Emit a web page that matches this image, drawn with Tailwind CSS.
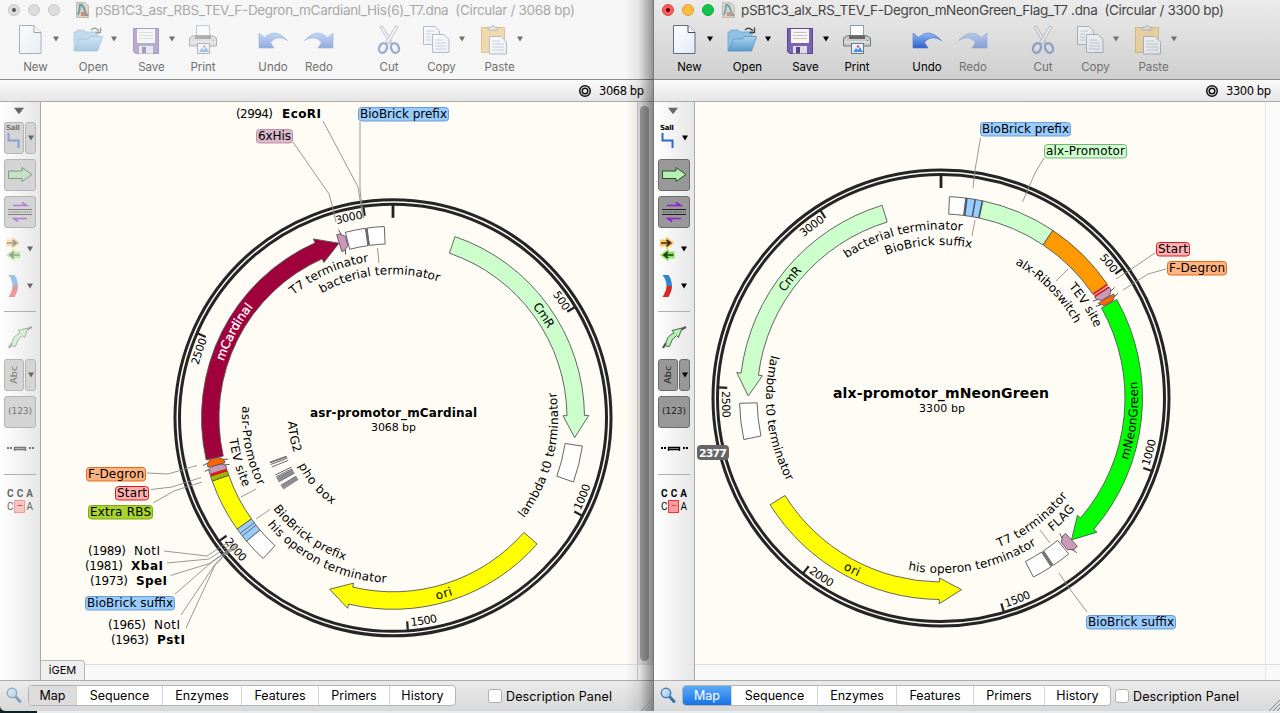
<!DOCTYPE html>
<html lang="en">
<head>
<meta charset="utf-8">
<title>Plasmid maps</title>
<script src="https://cdn.jsdelivr.net/npm/@tailwindcss/browser@4"></script>
</head>
<body class="w-[1280px] h-[713px] overflow-hidden bg-[#e9ebec] [font-family:Inter,Roboto,sans-serif] text-black">

<svg class="absolute w-0 h-0">
  <defs>
    <linearGradient id="gPaper" x1="0" y1="0" x2="1" y2="1"><stop offset="0" stop-color="#fff"/><stop offset="1" stop-color="#dfe9f5"/></linearGradient>
    <linearGradient id="gFolder" x1="0" y1="0" x2="0" y2="1"><stop offset="0" stop-color="#a9d3ee"/><stop offset="1" stop-color="#5a9dcb"/></linearGradient>
    <linearGradient id="gBlue" x1="0" y1="0" x2="0" y2="1"><stop offset="0" stop-color="#8fb8ee"/><stop offset="1" stop-color="#2c62cf"/></linearGradient>
    <linearGradient id="gLens" x1="0" y1="0" x2="1" y2="1"><stop offset="0" stop-color="#eaf6ff"/><stop offset="1" stop-color="#8cc0ea"/></linearGradient>
  </defs>
  <symbol id="i-new" viewBox="0 0 30 32"><path d="M4.500 1.500H19L26 8.500V29.500H4.500Z" fill="url(#gPaper)" stroke="#5d6d85"/><path d="M19 1.500V8.500H26" fill="#f5f9ff" stroke="#3f4d63"/></symbol>
  <symbol id="i-open" viewBox="0 0 30 32"><path d="M1 27V8h2l1-2h7l2 2h12v6" fill="#8fc1e2" stroke="#6ea3c9" stroke-width=".8"/><path d="M1 27L6.500 15h9l2-2.500H29.500L24.500 27Z" fill="url(#gFolder)" stroke="#5792bf" stroke-width=".8"/><path d="M18 6q4-4 8 1" fill="none" stroke="#444" stroke-width="1.300"/><path d="M27.500 3.500V8.500H22.500" fill="none" stroke="#444" stroke-width="1.300"/></symbol>
  <symbol id="i-save" viewBox="0 0 30 32"><path d="M2.500 4.500H27.500V29.500H4.500L2.500 27.500Z" fill="#7a63b0" stroke="#5a4690"/><rect x="6" y="5" width="18" height="14" fill="#f7f7f2"/><path d="M8 8.500H22M8 11.500H22M8 14.500H22" stroke="#b9b9b9" stroke-width=".8"/><rect x="8" y="22" width="14" height="7.500" fill="#dcdce4"/><rect x="11" y="23" width="4" height="6.500" fill="#554288"/></symbol>
  <symbol id="i-print" viewBox="0 0 30 32"><rect x="8.500" y="1.500" width="13" height="11" fill="#fff" stroke="#8aa0b5"/><path d="M6 11.500H24L28.500 14V22H1.500V14Z" fill="#c9c9c9" stroke="#777"/><rect x="7" y="12" width="16" height="3" fill="#666"/><path d="M2 18H28" stroke="#f0f0f0"/><circle cx="25.500" cy="16.500" r=".8" fill="#2b2"/><rect x="9.500" y="19.500" width="12" height="10" fill="#e8f3ff" stroke="#678"/><path d="M11 28l3-4 2 2 2-3 3 5z" fill="#4a8fe0"/><circle cx="16" cy="22.500" r="1.200" fill="#d55"/></symbol>
  <symbol id="i-undo" viewBox="0 0 30 32"><path d="M1 9L6.500 13.500Q17 3 29.500 16.500Q19 10 12.500 18.500L16 24H1Z" fill="url(#gBlue)" stroke="#4a76c8" stroke-width=".6"/></symbol>
  <symbol id="i-cut" viewBox="0 0 30 32"><path d="M6 3L8.500 2L18 18L16 20Z" fill="#e8eef5" stroke="#6f7f92" stroke-width=".8"/><path d="M24 3L21.500 2L12 18L14 20Z" fill="#f4f8fc" stroke="#6f7f92" stroke-width=".8"/><ellipse cx="9" cy="24" rx="3.800" ry="5" transform="rotate(25 9 24)" fill="none" stroke="#4668b4" stroke-width="2.400"/><ellipse cx="21" cy="24" rx="3.800" ry="5" transform="rotate(-25 21 24)" fill="none" stroke="#4668b4" stroke-width="2.400"/></symbol>
  <symbol id="i-copy" viewBox="0 0 30 32"><g stroke="#6e7f9c" fill="url(#gPaper)"><path d="M2.500 2.500H14L18.500 7V20.500H2.500Z"/><path d="M11.500 10.500H23L28 15.500V28.500H11.500Z"/></g><path d="M5 7H13M5 10H10M5 13H10M5 16H10M14 16H22M14 19H25M14 22H25M14 25H25" stroke="#a3adc0"/></symbol>
  <symbol id="i-paste" viewBox="0 0 30 32"><rect x="2.500" y="3.500" width="23" height="25" fill="#ecbf62" stroke="#c3923a"/><path d="M9 6V3.500H12Q14 -.5 16 3.500H19V6Z" fill="#d9dde2" stroke="#777"/><path d="M10.500 12.500H22L27.500 18V30H10.500Z" fill="url(#gPaper)" stroke="#6e7f9c"/><path d="M13 17H21M13 20H25M13 23H25M13 26H25" stroke="#a3adc0"/></symbol>
  <symbol id="i-tri" viewBox="0 0 6 6"><path d="M0 .5H6L3 5.500Z" fill="currentColor"/></symbol>
  <symbol id="i-doc" viewBox="0 0 13 16"><path d="M.5 .5H9L12.500 4V15.500H.5Z" fill="#d9cbb9" stroke="#b9ab9a"/><path d="M2 13Q4 8 4 3Q7 2 9 9Q10 12 12 14" fill="none" stroke="#3d8ca3" stroke-width="2"/><path d="M5 10h6v4h-6z" fill="#b07a62"/></symbol>
  <symbol id="i-feat" viewBox="0 0 32 32"><path d="M4.500 12H18V8.500L28 15.500L18 22.500V19.500H4.500Z" fill="#b4efb4" stroke="#2d4a2d"/></symbol>
  <symbol id="i-prim" viewBox="0 0 32 32"><path d="M4 13.500H28M4 18.500H28" stroke="#222" stroke-width="1.200"/><path d="M5 16H28" stroke="#777" stroke-width="2" stroke-dasharray="1.500 1"/><path d="M9 9.500H22.500L18 6.500" fill="none" stroke="#8a1fd6" stroke-width="1.700"/><path d="M23 22.500H10L14 25.500" fill="none" stroke="#8a1fd6" stroke-width="1.700"/></symbol>
  <symbol id="i-orf" viewBox="0 0 22 32"><path d="M3 6.500H9V3.500L17.500 10L9 16.500V13.500H3Z" fill="#ffc266"/><path d="M4 10H12.500M9.500 7L13.500 10L9.500 13" fill="none" stroke="#3a2a10" stroke-width="1.700"/><path d="M17.500 18.500H11.500V15.500L3 22L11.500 28.500V25.500H17.500Z" fill="#8fe05c"/><path d="M16.500 22H8M11 19L7 22L11 25" fill="none" stroke="#1d3a10" stroke-width="1.700"/></symbol>
  <symbol id="i-arc" viewBox="0 0 22 32"><path d="M5.500 5H11.500Q15 10 15 16H9.500Q9.500 10 5.500 5Z" fill="#2f86c8"/><path d="M15 16Q15 21 11.500 27H5.500Q9.500 21 9.500 16Z" fill="#d42a2a"/></symbol>
  <symbol id="i-curve" viewBox="0 0 32 32"><path d="M5 26L8 21M22 8L28 5" stroke="#5b4a5b" stroke-width="2.200"/><path d="M7.500 24Q8 14 16 11L14 8.500L24 6L20.500 15.500L18.500 13.500Q13 17 11.500 24.500Z" fill="#b4efb4" stroke="#4a6a4a"/></symbol>
  <symbol id="i-gap" viewBox="0 0 32 32"><path d="M3 15H8M25 15H30" stroke="currentColor" stroke-width="2" stroke-dasharray="2 1"/><path d="M10.500 18V14.500H21.500V18M11 16.500H21" fill="none" stroke="currentColor" stroke-width="1.300"/></symbol>
  <symbol id="i-search" viewBox="0 0 16 16"><path d="M9 9L14 14.500" stroke="#2d6fae" stroke-width="2.800" stroke-linecap="round"/><circle cx="6" cy="6" r="4.700" fill="url(#gLens)" stroke="#4a7eb0" stroke-width="1.500"/></symbol>
  <symbol id="i-ring" viewBox="0 0 14 14"><circle cx="7" cy="7" r="5.300" fill="none" stroke="#111" stroke-width="1.500"/><circle cx="7" cy="7" r="2.800" fill="none" stroke="#111" stroke-width="1.500"/></symbol>
</svg>

<div id="desk" class="flex w-[1280px] h-[711px]"></div>
<div class="flex h-[2px] w-[1280px]"><div class="w-[37px] bg-[#0c2226]"></div></div>

<script>
const tri = '<svg class="w-[6px] h-[6px]"><use href="#i-tri"/></svg>';
const wide = (id, label, space, on) => `<div class="flex flex-col w-[50px] ${space} ${on ? 'text-black' : 'text-[#707070]'}">
  <div class="flex items-center pl-[5px] h-[32px]"><svg class="w-[30px] h-[32px] ${on ? '' : 'opacity-50'}"><use href="#${id}"/></svg><span class="flex ml-[8px] -mt-[2px]">${tri}</span></div>
  <div class="text-center text-[11.500px] leading-[14px] pt-[4px] pl-px">${label}</div></div>`;
const slim = (id, label, space, on, flip) => `<div class="flex flex-col items-center w-[40px] ${space} ${on ? 'text-black' : 'text-[#707070]'}">
  <svg class="w-[30px] h-[32px] ${on ? '' : 'opacity-50'} ${flip ? '-scale-x-100' : ''}"><use href="#${id}"/></svg>
  <div class="text-center text-[11.500px] leading-[14px] pt-[4px]">${label}</div></div>`;

function toolbar(on) {
  return `<div class="flex h-[57px] pl-[10px] pt-[4px]">
    ${wide('i-new', 'New', '', on)}${wide('i-open', 'Open', 'ml-[8px]', on)}${wide('i-save', 'Save', 'ml-[8px]', on)}
    ${slim('i-print', 'Print', 'ml-[7px]', on)}${slim('i-undo', 'Undo', 'ml-[30px]', on)}${slim('i-undo', 'Redo', 'ml-[6px]', false, true)}
    ${slim('i-cut', 'Cut', 'ml-[30px]', false)}${wide('i-copy', 'Copy', 'ml-[7px]', false)}${wide('i-paste', 'Paste', 'ml-[8px]', false)}</div>`;
}

function sidebar(on) {
  const press = on ? 'bg-[#989898] border-[#6b6b6b]' : 'bg-[#d4d4d4] border-[#b5b5b5]';
  const fade = on ? '' : 'opacity-45';
  const sal = on ? 'border-transparent' : 'bg-[#d4d4d4] border-[#b5b5b5]';
  return `<div class="w-[41px] shrink-0 flex flex-col pl-[4px] pt-[5px] border-r border-[#a9a9a4] bg-linear-to-r from-white to-[#e6e6e6]">
    <svg class="w-[10px] h-[8px] ml-[10px] text-[#666]" viewBox="0 0 6 6" preserveAspectRatio="none"><path d="M0 .5H6L3 5.500Z" fill="currentColor"/></svg>
    <div class="flex flex-col gap-[5px] mt-[7px] w-[32px]">
      <div class="flex gap-px h-[32px]"><div class="relative w-[20px] rounded-[3px] border ${sal}"><span class="absolute left-[1px] top-[1px] text-[7px] font-bold leading-[9px] tracking-[-.3px] [font-family:'DejaVu_Sans',sans-serif] ${fade}">SalI</span><svg class="absolute -left-px -top-px w-[20px] h-[32px] ${fade}" viewBox="0 0 20 32"><path d="M4.500 11V18.500H14.500V26" fill="none" stroke="#2a66cc" stroke-width="2"/></svg></div><div class="flex items-center justify-center w-[11px] rounded-[3px] border ${sal} ${on ? '' : 'text-[#666]'}">${tri}</div></div>
      <div class="h-[32px] rounded-[3px] border ${press}"><svg class="-m-px w-[32px] h-[32px] ${fade}"><use href="#i-feat"/></svg></div>
      <div class="h-[32px] rounded-[3px] border ${press}"><svg class="-m-px w-[32px] h-[32px] ${fade}"><use href="#i-prim"/></svg></div>
      <div class="flex h-[32px] items-center"><svg class="-ml-px w-[22px] h-[32px] ${fade}"><use href="#i-orf"/></svg><span class="flex ml-[2px] -mt-px ${on ? '' : 'text-[#666]'}">${tri}</span></div>
      <div class="flex h-[32px] items-center"><svg class="-ml-px w-[22px] h-[32px] ${fade}"><use href="#i-arc"/></svg><span class="flex ml-[2px] -mt-px ${on ? '' : 'text-[#666]'}">${tri}</span></div>
    </div>
    <div class="w-[32px] h-px bg-[#b0b0b0] mt-[9px]"></div>
    <div class="flex flex-col gap-[5px] mt-[10px] w-[32px]">
      <div class="h-[32px]"><svg class="w-[32px] h-[32px] ${fade}"><use href="#i-curve"/></svg></div>
      <div class="flex gap-px h-[32px]"><div class="flex items-center justify-center w-[20px] rounded-[3px] border ${press}"><span class="-rotate-90 text-[9.500px] leading-none [font-family:'DejaVu_Sans',sans-serif] ${on ? 'text-[#222]' : 'text-[#777]'}">Abc</span></div><div class="flex items-center justify-center w-[11px] rounded-[3px] border ${press} ${on ? '' : 'text-[#666]'}">${tri}</div></div>
      <div class="flex items-center justify-center h-[32px] rounded-[3px] border text-[9px] [font-family:'DejaVu_Sans',sans-serif] ${press} ${on ? 'text-[#222]' : 'text-[#777]'}">(123)</div>
      <div class="h-[32px] ${on ? '' : 'text-[#777]'}"><svg class="w-[32px] h-[32px]"><use href="#i-gap"/></svg></div>
    </div>
    <div class="w-[32px] h-px bg-[#b0b0b0] mt-[9px]"></div>
    <div class="w-[26px] ml-[3px] mt-[12px] text-[10px] leading-[13px] [font-family:Roboto,sans-serif] ${on ? '' : 'text-[#666]'}">
      <div class="flex justify-between font-bold"><span>C</span><span>C</span><span>A</span></div>
      <div class="flex justify-between items-center"><span>C</span><span class="w-[11px] h-[13px] leading-[10px] text-center border text-[#c44] ${on ? 'bg-[#ff9d9d] border-[#e33]' : 'bg-[#f9c4c4] border-[#e99]'}">–</span><span>A</span></div>
    </div></div>`;
}

function bottom(on) {
  const tabs = [['Map', on ? 'w-[48px]' : 'w-[47px]'], ['Sequence', 'w-[86px]'], ['Enzymes', 'w-[79px]'], ['Features', 'w-[77px]'], ['Primers', 'w-[71px]'], ['History', 'w-[66px]']];
  return `<div class="flex items-center h-[31px] border-t border-[#acacac] bg-linear-to-b from-[#ebebeb] to-[#d8d8d8] pl-[6px] text-[12.500px] ${on ? '' : 'rounded-bl-[5px]'}">
    <svg class="w-[16px] h-[16px] shrink-0 -mt-[2px] ${on ? '' : 'opacity-55'}"><use href="#i-search"/></svg>
    <div class="flex ml-[6px] -mt-px h-[21px] shrink-0 rounded-[4px] border border-[#b4b4b4] bg-white overflow-hidden">${tabs.map((t, i) =>
      `<div class="${t[1]} leading-[19px] text-center ${i ? 'border-l border-[#d5d5d5]' : on ? 'bg-linear-to-b from-[#5aa9f6] to-[#1173e6] text-white' : 'bg-[#dcdcdc]'}">${t[0]}</div>`).join('')}</div>
    <div class="w-[14px] h-[14px] shrink-0 rounded-[3px] border border-[#b0b0b0] bg-white ${on ? 'ml-[4px]' : 'ml-[32px]'}"></div>
    <svg class="ml-[4px] w-[108px] h-[18px] shrink-0"><text x="0" y="14" textLength="106">Description Panel</text></svg></div>`;
}

function win(o) {
  const on = o.on;
  const dots = on ? ['bg-[#fc5b57] border-[#df4744]', 'bg-[#fdbb40] border-[#de9f34]', 'bg-[#12c552] border-[#12ac2c]']
                  : ['bg-[#dcdcdc] border-[#c8c8c8]', 'bg-[#dcdcdc] border-[#c8c8c8]', 'bg-[#dcdcdc] border-[#c8c8c8]'];
  return `<div class="relative h-[711px] flex flex-col ${on ? 'w-[627px] border-l border-[#777]' : 'w-[653px] bg-[#0c2226]'} shrink-0">
    <div class="h-[80px] border-b border-[#8a8a8a] ${on ? 'bg-linear-to-b from-[#ebebeb] to-[#cfcfcf]' : 'bg-[#f6f6f6]'}">
      <div class="flex items-center h-[20px] pl-[8px]">
        <div class="flex gap-[8px]">${dots.map((d, i) => `<div class="flex items-center justify-center w-[12px] h-[12px] rounded-full border ${d}">${i ? '' : `<div class="w-[4px] h-[4px] rounded-full ${on ? 'bg-[#4d0000]' : 'bg-[#555]'}"></div>`}</div>`).join('')}</div>
        <svg class="w-[13px] h-[16px] shrink-0 ${on ? 'ml-[8px] opacity-70' : 'ml-[16px] opacity-80'}"><use href="#i-doc"/></svg>
        <svg class="h-[20px] w-[490px] ml-[5px] overflow-visible"><text x="1" y="15" textLength="${on ? 483 : 480}" class="text-[13.500px] whitespace-pre ${on ? 'fill-[#444]' : 'fill-[#a8a8a8]'}">${o.title}</text></svg>
      </div>
      ${toolbar(on)}
    </div>
    <div class="flex items-center justify-end h-[22px] border-b border-[#aeaaa3] bg-linear-to-b from-[#fafafa] to-[#e6e6e6] pr-[8px]">
      <svg class="w-[14px] h-[14px]"><use href="#i-ring"/></svg>
      <svg class="w-[46px] h-[16px] ml-[7px]"><text x="0" y="12" textLength="45" class="text-[11.500px] [font-family:'DejaVu_Sans',sans-serif]">${o.bp}</text></svg>
    </div>
    <div class="flex flex-1 min-h-0">${sidebar(on)}
      <div class="flex flex-col flex-1 min-w-0">
        <div class="flex flex-1 min-h-0 bg-[#fffcf5]"><div class="flex-1"></div>${on
          ? '<div class="w-[15px] bg-[#fafafa] border-l border-[#e4e4e4]"></div>'
          : '<div class="w-[16px] bg-[#e4e3e6] border-l border-[#c9c8cc] pl-[2px] pr-[4px]"><div class="h-[555px] mt-[4px] rounded-full bg-[#a2a2a2]"></div></div>'}</div>
        <div class="relative h-[16px] flex justify-between border-t border-[#e0ded8] bg-[#f9f9f9]">${on
          ? '<span></span><div class="w-[15px] border-l border-[#e4e4e4]"></div>'
          : '<div class="relative w-[44px] h-[20px] -mt-[5px] leading-[18px] text-center text-[11px] border-t border-r border-[#b5b5b5] rounded-tr-[4px] bg-[#efefef] z-20">iGEM</div><div class="w-[16px] border-l border-[#c9c8cc]"></div>'}</div>
      </div>
    </div>
    ${bottom(on)}
    ${on ? '' : '<div class="absolute right-0 top-0 w-[28px] h-full bg-linear-to-r from-black/0 via-black/8 to-black/40"></div>'}
    <svg class="absolute bottom-0 ${on ? 'right-0' : 'right-[1px]'} w-[12px] h-[12px]"><path d="M1 12L12 1M5 12L12 5M9 12L12 9" stroke="#888"/></svg>
  </div>`;
}

document.getElementById('desk').innerHTML =
  win({on: false, title: 'pSB1C3_asr_RBS_TEV_F-Degron_mCardianl_His(6)_T7.dna&#160; (Circular / 3068 bp)', bp: '3068 bp'}) +
  win({on: true, title: 'pSB1C3_alx_RS_TEV_F-Degron_mNeonGreen_Flag_T7 .dna&#160; (Circular / 3300 bp)', bp: '3300 bp'}) +
  '<svg id="maps" class="absolute left-0 top-0 w-[1280px] h-[713px] pointer-events-none" viewBox="0 0 1280 713"></svg>';

// Circular map drawing: angles are degrees clockwise from twelve o'clock.
let out = '', pid = 0;
function map(m) {
  const [cx, cy] = m.c, R = m.R, a = R - 45.500, b = R - 28, mid = (a + b) / 2;
  const pt = (r, t) => (cx + r * Math.sin(t * Math.PI / 180)).toFixed(2) + ' ' + (cy - r * Math.cos(t * Math.PI / 180)).toFixed(2);
  const arc = (r, s, e) => `A${r} ${r} 0 ${Math.abs(e - s) > 180 ? 1 : 0} ${e > s ? 1 : 0} ${pt(r, e)}`;
  const ring = r => `<circle cx="${cx}" cy="${cy}" r="${r}" fill="none" stroke="#252525" stroke-width="3"/>`;
  out += ring(R - 1.500) + ring(R - 6);
  out += `<path d="M${pt(R - 6, 0)}L${pt(R - 19.500, 0)}" stroke="#222" stroke-width="2.800"/>`;
  for (const f of m.feats) {
    const [s, e, fill, base] = f;
    const d = base === undefined
      ? `M${pt(b, s)}${arc(b, s, e)}L${pt(a, e)}${arc(a, e, s)}Z`
      : `M${pt(b, s)}${arc(b, s, base)}L${pt(b + 4.300, base)}L${pt(mid, e)}L${pt(a - 4, base)}L${pt(a, base)}${arc(a, base, s)}Z`;
    out += `<path d="${d}" fill="${fill}" stroke="#555" stroke-width=".9"/>`;
  }
  // Short features: a body cut off square at the tip, with a thin line for the barbs.
  for (const [s, e, base, fill] of m.stubs || [])
    out += `<path d="M${pt(b, s)}L${pt(b, base)}L${pt(b - 4, e)}L${pt(a + 4, e)}L${pt(a, base)}L${pt(a, s)}Z" fill="${fill}" stroke="#555" stroke-width=".9"/><path d="M${pt(b + 4.300, base)}L${pt(b - 1, base + (e - base) * .3)}M${pt(a - 4, base)}L${pt(a + 1, base + (e - base) * .3)}" stroke="#555" stroke-width="1"/>`;
  for (const [t, r1, r2, w, c] of m.bars || []) out += `<path d="M${pt(r1, t)}L${pt(r2, t)}" stroke="${c || '#666'}" stroke-width="${w}"/>`;
  const curved = (txt, r, s, e, cls) => {
    const id = 'p' + (pid++), len = Math.abs(e - s) * Math.PI / 180 * r, x = e > s ? 2 : -2;
    out += `<path id="${id}" d="M${pt(r, s)}${arc(r, s, e + x)}" fill="none"/><text class="${cls}" textLength="${len.toFixed(1)}"><textPath href="#${id}" textLength="${len.toFixed(1)}">${txt}</textPath></text>`;
  };
  for (const t of m.texts) curved(t[0], t[1], t[2], t[3], t[4] || 'text-[12px]');
  for (let n = 500; n < m.len; n += 500) {
    const t = n / m.len * 360, w = (n < 1000 ? 20.500 : 27);
    out += `<path d="M${pt(R - 7, t)}L${pt(R - 15.500, t)}" stroke="#222" stroke-width="2.200"/>`;
    if (t < 90 || t > 280) { const r = R - 18; const k = 180 / Math.PI / r; curved(n, r, t - (w + 2) * k, t - 2 * k, 'text-[11px]'); }
    else { const r = R - 10.500; const k = 180 / Math.PI / r; curved(n, r, t - 3.500 * k, t - (w + 3.500) * k, 'text-[11px]'); }
  }
  for (const l of m.leads) out += `<polyline points="${l}" fill="none" stroke="#8c8c8c" stroke-width=".9"/>`;
  for (const [x, y, w, txt, fill, st] of m.tags) out += `<rect x="${x + .5}" y="${y + .5}" width="${w - 1}" height="13.500" rx="3" fill="${fill}" stroke="${st}"/><text x="${x + 2}" y="${y + 11}" textLength="${w - 4}" class="text-[12px]">${txt}</text>`;
  for (const [x, y, w, txt, cls] of m.plain) out += `<text x="${x}" y="${y}" textLength="${w}" class="${cls}">${txt}</text>`;
}
const mint = '#ccffcc', sky = '#99ccff', pink = '#cc99b8', N = 'text-[12px]', B = 'text-[12px] font-bold';
map({c: [393, 417.800], R: 219.500, len: 3068,
  feats: [[18.900, 96.200, mint, 89.300], [98.500, 109.600, '#fff'], [131.200, 200.300, '#ffff00', 193.400], [257.300, 342.800, '#a0003c', 336],
    [345.600, 351.700, '#fff'], [352.200, 357.400, '#fff'], [222.700, 229.900, '#fff'], [229.900, 234.500, sky],
    [234.500, 250.700, '#ffff00'], [250.700, 252.300, '#99bb00']],
  stubs: [[342.900, 345.300, 343.800, pink], [252.900, 255, 254.100, pink], [255, 257.200, 255.900, '#ff6600']],
  bars: [[352, 174, 191.500, 1.800], [232.900, 174, 191.500, 1], [231.900, 174, 191.500, 1], [252.500, 174, 191.500, 2.200, '#ee1111'],
    [250, 113, 131, 1.600], [249.100, 113, 131, 1], [247.900, 113, 131, 1], [244.100, 113, 131, 1], [243.200, 113, 131, 1], [241.600, 113, 131, 3.800, '#8a8d94'], [242.600, 113, 131, 1], [240.700, 113, 131, .8], [238, 113, 131, 3.800, '#8a8d94'], [239, 113, 131, .8], [237, 113, 131, .8]],
  texts: [['T7 terminator', 158, 320.900, 351.100], ['bacterial terminator', 143.500, 330.200, 378.500], ['lambda t0 terminator', 165, 127.500, 81.100],
    ['asr-Promotor', 151, 274.500, 243.200], ['TEV site', 165, 262.600, 245], ['ATG2', 105, 268, 250.400], ['pho box', 106, 243.300, 215],
    ['BioBrick prefix', 150.500, 232.800, 198.800], ['his operon terminator', 165, 229.600, 182.400], ['ori', 187, 166.500, 161.300],
    ['CmR', 178.500, 51.400, 60.100], ['mCardinal', 178.500, 288.500, 308.300, 'text-[12px] fill-white stroke-white stroke-[0.3px]']],
  leads: ['293,142 329,194 332.500,207 336,222', '323,121 358,187 360,200 363,218', '360,122 360,190 361.500,203 364,218', '377.500,248 379,263',
    '147,473 168,474 197,465.500', '151,489.500 172,487 201,477.500', '153,503 174,491 202,482', '241,497 256,489', '256,519 270,509.500',
    '164,551 207,556 222,546 231,541', '167,563 209,559 224,549 233,543', '170.500,575.500 211,563 226,552 235,545', '175,594 213,561 229,549', '181,615 214.500,565 225,554 236,546', '186,628 215,565 228,553 238,547'],
  tags: [[256, 129, 37, '6xHis', '#dbb8cc', '#bf8fa9'], [358, 107, 91, 'BioBrick prefix', sky, '#6d9bd0'], [86, 467, 60, 'F-Degron', '#ffb380', '#e06a1a'],
    [115, 486, 34, 'Start', '#ffb0b0', '#e01818'], [88, 505, 65, 'Extra RBS', '#a8d42c', '#7fa61a'], [85, 596, 90, 'BioBrick suffix', sky, '#6d9bd0']],
  plain: [[236, 118, 37, '(2994)', N], [282, 118, 39, 'EcoRI', B], [88, 555, 38, '(1989)', N], [134, 555, 26, 'NotI', N], [85, 570, 38, '(1981)', N], [131, 570, 32, 'XbaI', B],
    [90, 585, 38, '(1973)', N], [136, 585, 31, 'SpeI', B], [108, 629, 38, '(1965)', N], [154, 629, 26, 'NotI', N], [111, 644, 38, '(1963)', N], [157, 644, 28, 'PstI', B],
    [310, 417, 167, 'asr-promotor_mCardinal', B], [371, 431, 45, '3068 bp', 'text-[11px]']]});
map({c: [941, 398], R: 229.500, len: 3300,
  feats: [[2.400, 7.100, '#fff'], [7.100, 12, sky], [12, 33.700, mint], [33.700, 55.500, '#ff9900'],
    [60.700, 137.400, '#00ff00', 130.700], [140.700, 146.100, '#fff'], [146.900, 152.700, '#fff'],
    [238, 173.900, '#ffff00', 180.500], [258.100, 268.500, '#fff'], [343, 270.600, mint, 277.100]],
  stubs: [[56.700, 58.700, 57.500, pink], [58.900, 60.500, 59.400, '#ff6600'], [137.400, 140.200, 138.700, pink]],
  bars: [[7.400, 184, 201.500, 1.500, '#456'], [9.800, 184, 201.500, 1.500, '#456'], [11.800, 184, 201.500, 1.200, '#456'], [55.800, 184, 201.500, 1.500, '#e11'], [56.500, 184, 201.500, 1.500, '#e11'], [146.500, 184, 201.500, 1.800]],
  texts: [['bacterial terminator', 168.500, -34, 7.200], ['BioBrick suffix', 153, -20.900, 11.500], ['alx-Riboswitch', 153, 28.900, 61], ['TEV site', 169, 48.900, 65.500],
    ['lambda t0 terminator', 175, 284.200, 241.600], ['his operon terminator', 175, 190.900, 147], ['T7 terminator', 160, 158.800, 127.800], ['FLAG', 174, 140.200, 129.600],
    ['mNeonGreen', 197, 108.400, 85.200], ['ori', 197, 209.800, 205], ['CmR', 188.500, 304.100, 312.500]],
  leads: ['980.500,138 975,170 973,188', '1044,158 1035,173 1029,187 1022.500,202', '1155,253 1127,272 1116,279', '1166,269 1148,274 1123,290', '1087,612 1069,588 1059,573', '1040,530 1050,543', '975,220 972,236', '1056,281 1068,269'],
  tags: [[980, 122, 91, 'BioBrick prefix', sky, '#6d9bd0'], [1044, 144, 83, 'alx-Promotor', mint, '#79b079'], [1156, 242, 34, 'Start', '#ffb0b0', '#e01818'],
    [1167, 261, 60, 'F-Degron', '#ffb380', '#e06a1a'], [1086, 615, 90, 'BioBrick suffix', sky, '#6d9bd0']],
  plain: [[833, 398, 216, 'alx-promotor_mNeonGreen', 'text-[14px] font-bold'], [919, 412, 46, '3300 bp', 'text-[11px]']]});
out += '<rect x="697" y="445" width="32" height="15" rx="4" fill="#666"/><text x="699" y="456.500" textLength="28" class="text-[11px] font-bold fill-white">2377</text>';
document.getElementById('maps').innerHTML = `<g class="[font-family:'DejaVu_Sans',sans-serif]">${out}</g>`;
</script>
</body>
</html>
